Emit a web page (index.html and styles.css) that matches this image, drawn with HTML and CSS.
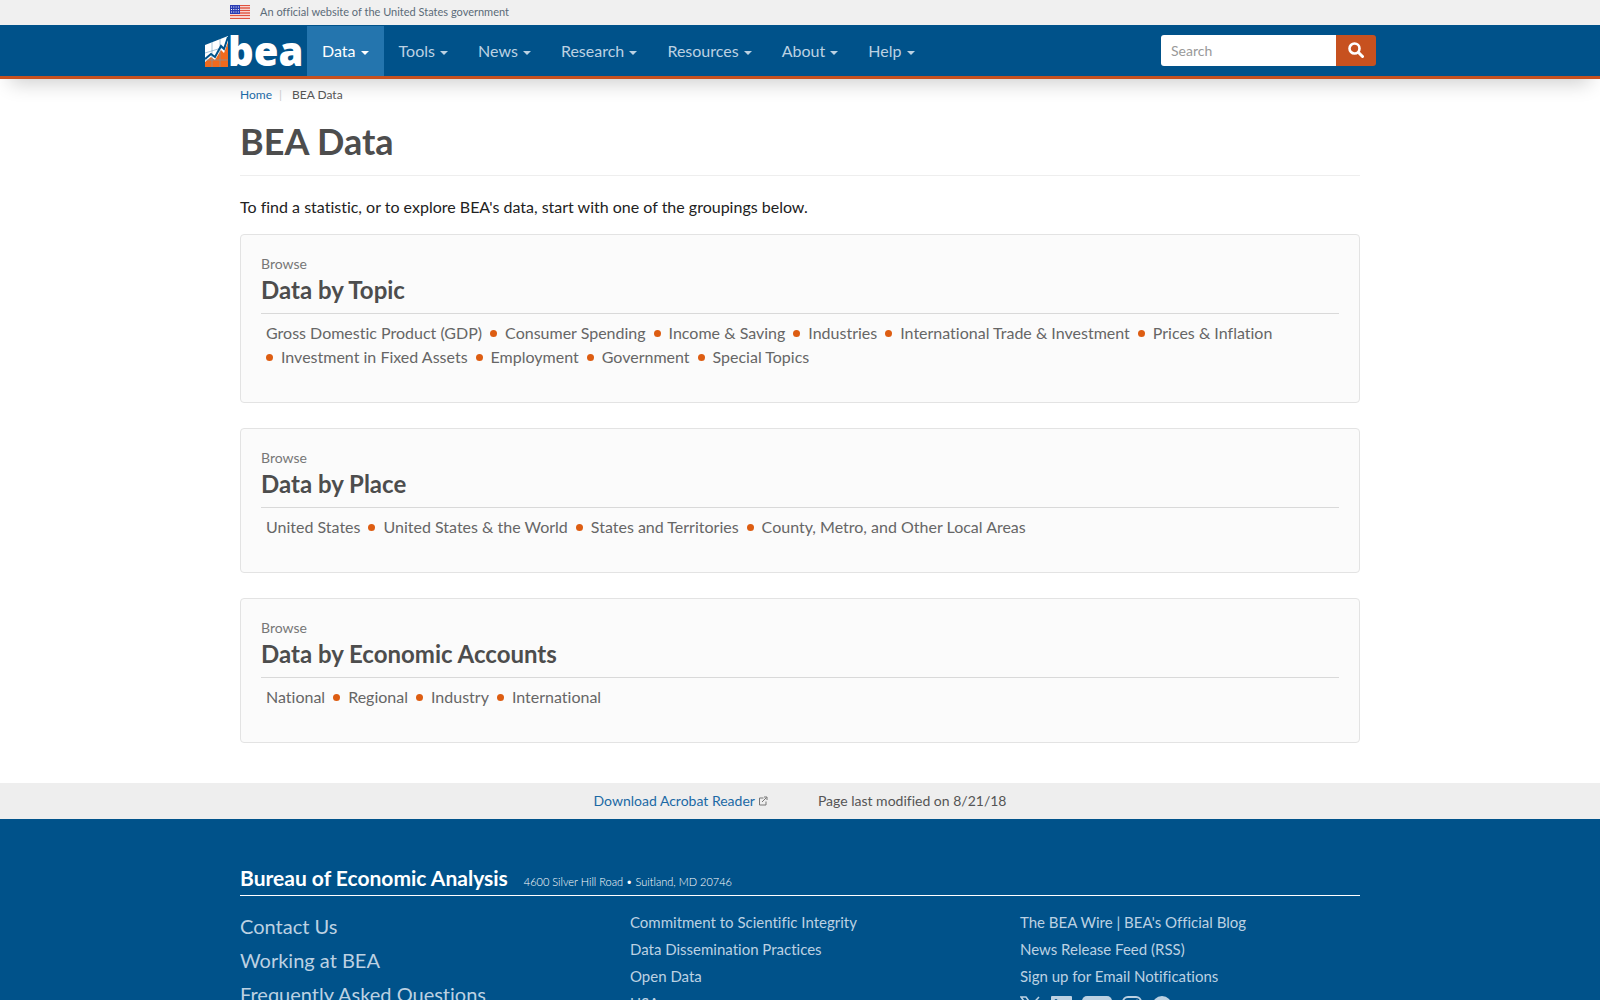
FILE: index.html
```html
<!DOCTYPE html>
<html lang="en">
  <head>
    <meta charset="UTF-8" />
    <meta name="viewport" content="width=device-width, initial-scale=1.0" />
    <title>BEA Data</title>
    <link rel="stylesheet" href="styles.css">
  </head>
  <body>
    <div class="gov-banner">
      <div class="container gov-banner-inner">
        <svg class="flag" width="20" height="14" viewBox="0 0 20 14" aria-hidden="true">
          <rect width="20" height="14" fill="#fff" />
          <path d="M0 .5h20M0 3h20M0 5.500h20M0 8h20M0 10.500h20M0 13.400h20" stroke="#e0523e" stroke-width="1.300" />
          <rect width="10" height="9" fill="#2a3cb4" />
          <path d="M1 2h8M1 4.500h8M1 7h8" stroke="#fff" stroke-width="1" stroke-dasharray="1 1.300" />
        </svg>
        <span>An official website of the United States government</span>
      </div>
    </div>

    <header class="navbar">
      <div class="navbar-inner">
        <a class="logo" href="#">
          <svg width="97" height="50" viewBox="0 -7 97 50" role="img" aria-labelledby="logo-text">
            <path d="M0 12L23 3V34H0z" fill="#fff" />
            <path d="M0 29L6 24L10 27L16 17L19 20L23 9V34H0z" fill="#f06a1d" />
            <path d="M7 9V34M15 6V34M0 20L23 13M0 27H23" stroke="#6b9dc0" stroke-width="1" opacity=".6" fill="none" />
            <path d="M0 26L6 21L10 24L16 13L19 16L23 4" stroke="#00528a" stroke-width="2" fill="none" />
            <text id="logo-text" class="logo-text" x="23" y="33">bea</text>
          </svg>
        </a>
        <nav>
          <ul class="nav">
            <li class="active"><a href="#">Data <span class="caret"></span></a></li>
            <li><a href="#">Tools <span class="caret"></span></a></li>
            <li><a href="#">News <span class="caret"></span></a></li>
            <li><a href="#">Research <span class="caret"></span></a></li>
            <li><a href="#">Resources <span class="caret"></span></a></li>
            <li><a href="#">About <span class="caret"></span></a></li>
            <li><a href="#">Help <span class="caret"></span></a></li>
          </ul>
        </nav>
        <form class="search">
          <input type="text" name="query" placeholder="Search" aria-label="Search" />
          <button type="submit" aria-label="Search">
            <svg width="16" height="16" viewBox="0 0 16 16" aria-hidden="true">
              <circle cx="6.500" cy="6.500" r="5" fill="none" stroke="#fff" stroke-width="2.600" />
              <path d="M10.500 10.500L14.500 14.500" stroke="#fff" stroke-width="3" stroke-linecap="round" />
            </svg>
          </button>
        </form>
      </div>
    </header>

    <main class="container main">
      <ol class="breadcrumb">
        <li><a href="#">Home</a></li>
        <li>BEA Data</li>
      </ol>
      <h1>BEA Data</h1>
      <p class="intro">To find a statistic, or to explore BEA's data, start with one of the groupings below.</p>

      <section class="well">
        <p class="browse">Browse</p>
        <h2>Data by Topic</h2>
        <ul class="topics">
          <li><a href="#">Gross Domestic Product (GDP)</a></li>
          <li><a href="#">Consumer Spending</a></li>
          <li><a href="#">Income &amp; Saving</a></li>
          <li><a href="#">Industries</a></li>
          <li><a href="#">International Trade &amp; Investment</a></li>
          <li><a href="#">Prices &amp; Inflation</a></li>
          <li><a href="#">Investment in Fixed Assets</a></li>
          <li><a href="#">Employment</a></li>
          <li><a href="#">Government</a></li>
          <li><a href="#">Special Topics</a></li>
        </ul>
      </section>

      <section class="well">
        <p class="browse">Browse</p>
        <h2>Data by Place</h2>
        <ul class="topics">
          <li><a href="#">United States</a></li>
          <li><a href="#">United States &amp; the World</a></li>
          <li><a href="#">States and Territories</a></li>
          <li><a href="#">County, Metro, and Other Local Areas</a></li>
        </ul>
      </section>

      <section class="well">
        <p class="browse">Browse</p>
        <h2>Data by Economic Accounts</h2>
        <ul class="topics">
          <li><a href="#">National</a></li>
          <li><a href="#">Regional</a></li>
          <li><a href="#">Industry</a></li>
          <li><a href="#">International</a></li>
        </ul>
      </section>
    </main>

    <div class="page-info">
      <a href="#">Download Acrobat Reader<svg class="ext" width="10" height="10" viewBox="0 0 10 10" aria-hidden="true">
          <path d="M5.500 2H1.500V9H8V5.500M4 6L8.500 1.500M6 1H9V4" fill="none" stroke="#777" />
        </svg></a>
      <span>Page last modified on 8/21/18</span>
    </div>

    <footer class="footer">
      <div class="container">
        <div class="footer-head">
          <h2>Bureau of Economic Analysis</h2>
          <span class="address">4600 Silver Hill Road • Suitland, MD 20746</span>
        </div>
        <div class="footer-cols">
          <ul class="links-large">
            <li><a href="#">Contact Us</a></li>
            <li><a href="#">Working at BEA</a></li>
            <li><a href="#">Frequently Asked Questions</a></li>
          </ul>
          <ul>
            <li><a href="#">Commitment to Scientific Integrity</a></li>
            <li><a href="#">Data Dissemination Practices</a></li>
            <li><a href="#">Open Data</a></li>
            <li><a href="#">USA.gov</a></li>
          </ul>
          <div>
            <ul>
              <li><a href="#">The BEA Wire | BEA's Official Blog</a></li>
              <li><a href="#">News Release Feed (RSS)</a></li>
              <li><a href="#">Sign up for Email Notifications</a></li>
            </ul>
            <div class="social">
              <a href="#" aria-label="X">
                <svg width="21" height="20" viewBox="0 0 21 20"><path d="M1 1H6L19 19H14zM19 1L12 8.500M9 11.500L2 19" fill="none" stroke="#bcd1e2" stroke-width="1.600" /></svg>
              </a>
              <a href="#" aria-label="LinkedIn">
                <svg width="21" height="21" viewBox="0 0 21 21"><rect width="21" height="21" rx="1" fill="#bcd1e2" /><path d="M5 8V17M10 17V8M10 12Q10 9 13 9T16 12V17" fill="none" stroke="#00528a" stroke-width="2.500" /><circle cx="5" cy="4.500" r="1.600" fill="#00528a" /></svg>
              </a>
              <a href="#" aria-label="YouTube">
                <svg width="30" height="20" viewBox="0 0 30 20"><rect width="30" height="20" rx="5" fill="#bcd1e2" /><path d="M12 6L20 10L12 14z" fill="#00528a" /></svg>
              </a>
              <a href="#" aria-label="Instagram">
                <svg width="20" height="20" viewBox="0 0 20 20" fill="none" stroke="#bcd1e2" stroke-width="2"><rect x="1" y="1" width="18" height="18" rx="5" /><circle cx="10" cy="10" r="4" /><circle cx="15" cy="5" r=".5" /></svg>
              </a>
              <a href="#" aria-label="Facebook">
                <svg width="20" height="20" viewBox="0 0 20 20"><circle cx="10" cy="10" r="10" fill="#bcd1e2" /><path d="M11 20V8Q11 5.500 14 6M7.500 11H13.500" fill="none" stroke="#00528a" stroke-width="2.400" /></svg>
              </a>
            </div>
          </div>
        </div>
      </div>
    </footer>
  </body>
</html>
```

FILE: styles.css
```css
* {
  box-sizing: border-box;
}

body {
  font-family: Lato, "Open Sans", sans-serif;
  font-size: 16px;
  font-variant-ligatures: none;
  line-height: 25px;
  color: #222;
  background-color: #fff;
  margin: 0;
}

a {
  color: #1b69a5;
  text-decoration: none;
}

ul,
ol {
  list-style: none;
  margin: 0;
  padding: 0;
}

.container {
  max-width: 1120px;
  margin: 0 auto;
}

.gov-banner {
  padding-bottom: 2px;
  background-color: #f0f0f0;
}

.gov-banner-inner {
  display: flex;
  align-items: center;
  gap: 10px;
  max-width: 1140px;
  color: #5b6b78;
  font-size: 11px;
  line-height: 23px;
}

.navbar {
  background-color: #00528a;
  border-bottom: 3px solid #c7511f;
  box-shadow: 0 14px 20px -10px rgba(0, 0, 0, 0.2);
}

.navbar-inner {
  display: flex;
  align-items: center;
  max-width: 1190px;
  margin: 0 auto;
  padding: 1px 19px 0 0;
}

.logo {
  display: flex;
  margin-right: 5px;
}

.logo-text {
  font-family: "Open Sans", sans-serif;
  font-size: 40px;
  font-weight: 800;
  fill: #fff;
}

.nav {
  display: flex;
}

.nav a {
  display: block;
  padding: 12px 15px 13px;
  color: #bcd1e2;
}

.nav .active a {
  background-color: #2475ae;
  color: #fff;
}

.caret {
  display: inline-block;
  vertical-align: middle;
  margin-left: 1px;
  border-top: 4px solid;
  border-left: 4px solid transparent;
  border-right: 4px solid transparent;
}

.search {
  display: flex;
  margin-left: auto;
  margin-bottom: 2px;
}

.search input {
  width: 175px;
  height: 31px;
  padding: 0 10px;
  border: 0;
  border-radius: 3px 0 0 3px;
  font: inherit;
  font-size: 14px;
}

.search input::placeholder {
  color: #999;
}

.search button {
  display: flex;
  align-items: center;
  justify-content: center;
  width: 40px;
  padding: 0;
  border: 0;
  border-radius: 0 3px 3px 0;
  background-color: #c7511f;
}

.main {
  padding-bottom: 15px;
}

.breadcrumb {
  display: flex;
  padding-top: 6px;
  font-size: 12px;
  line-height: 20px;
  color: #555;
}

.breadcrumb li + li::before {
  content: "|";
  padding: 0 10px 0 7px;
  color: #ccc;
}

h1 {
  margin: 15px 0 18px;
  padding-bottom: 13px;
  border-bottom: 1px solid #eee;
  font-size: 36px;
  font-weight: 700;
  line-height: 42px;
  color: #4d4d4d;
}

.intro {
  margin: 0 0 15px;
}

.well {
  margin-bottom: 25px;
  padding: 19px 20px 33px;
  border: 1px solid #e3e3e3;
  border-radius: 4px;
  background-color: #fbfbfb;
}

.browse {
  margin: 0;
  font-size: 14px;
  line-height: 20px;
  color: #777;
}

.well h2 {
  margin: 0 0 7px;
  padding-bottom: 7px;
  border-bottom: 1px solid #d9d9d9;
  font-size: 24px;
  font-weight: 700;
  line-height: 32px;
  color: #4d4d4d;
}

.topics {
  display: flex;
  flex-wrap: wrap;
  column-gap: 8px;
  padding: 0 5px;
  line-height: 24px;
}

.topics li {
  display: flex;
  align-items: center;
}

.topics li + li::before {
  content: "";
  width: 7px;
  height: 7px;
  margin-right: 8px;
  border-radius: 50%;
  background-color: #dd5d12;
}

.topics a {
  color: #666;
}

.page-info {
  display: flex;
  justify-content: center;
  gap: 50px;
  padding: 5px 0 6px;
  background-color: #eee;
  font-size: 14px;
  color: #555;
}

.ext {
  margin-left: 3px;
}

.footer {
  padding: 44px 0;
  background-color: #00528a;
  color: #fff;
}

.footer-head {
  display: flex;
  align-items: baseline;
  gap: 16px;
  padding-bottom: 1px;
  border-bottom: 1px solid #fff;
}

.footer-head h2 {
  margin: 0;
  font-size: 21px;
  font-weight: 700;
  line-height: 30px;
}

.address {
  font-size: 11px;
  font-weight: 300;
}

.footer-cols {
  display: grid;
  grid-template-columns: repeat(3, 1fr);
  column-gap: 50px;
  padding-top: 13px;
  font-size: 15px;
  line-height: 27px;
}

.footer-cols a {
  color: #bcd1e2;
}

.links-large {
  font-size: 20px;
  line-height: 34px;
}

.social {
  display: flex;
  gap: 10px;
  padding-top: 6px;
}
```
